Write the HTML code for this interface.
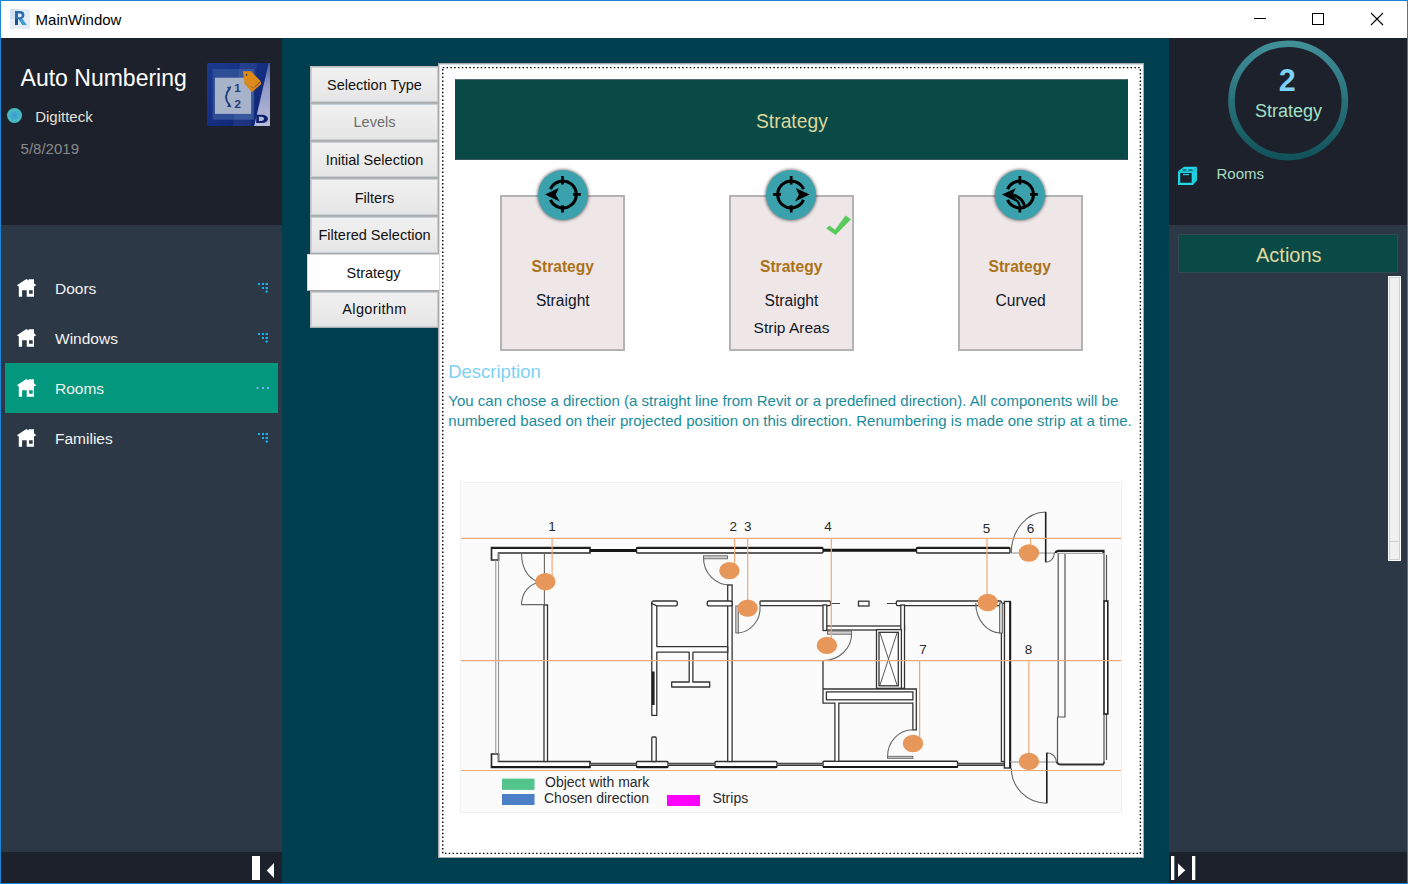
<!DOCTYPE html>
<html><head><meta charset="utf-8"><title>MainWindow</title>
<style>
*{margin:0;padding:0;box-sizing:border-box}
html,body{width:1408px;height:884px;overflow:hidden;background:#003f4f;font-family:"Liberation Sans",sans-serif}
.a{position:absolute}
.t{position:absolute;white-space:nowrap;line-height:1}
.tab{position:absolute;left:310px;width:129px;border:1px solid #acacac;border-top-color:#b2b2b2;border-left-color:#bdbdbd;background:linear-gradient(#f1f1f1,#e5e5e5);box-shadow:inset 0 0 0 1px #c5d0d4}
.tabt{position:absolute;left:0;width:100%;text-align:center;font-size:14.5px;color:#101010;line-height:1;white-space:nowrap}
.card{position:absolute;top:195px;width:125px;height:156px;background:#efe6e8;border:2px solid #b3b3b3}
.circ{position:absolute;top:170px;width:50px;height:50px;border-radius:50%;background:#3aa1ad;box-shadow:0 0 3px 1px rgba(0,0,0,.45)}
.nav{position:absolute;left:55px;font-size:15.5px;color:#f2f2f2;line-height:1;white-space:nowrap}
</style></head><body>
<!-- window border -->
<div class="a" style="left:0;top:0;width:1408px;height:884px;border:1px solid #1a84d8"></div>
<!-- title bar -->
<div class="a" style="left:1px;top:1px;width:1406px;height:37px;background:#fff"></div>
<svg class="a" style="left:10px;top:9px" width="20" height="20" viewBox="0 0 20 20">
 <rect x="0" y="0" width="20" height="20" fill="#e4ecf6"/>
 <rect x="0" y="0" width="8" height="10" fill="#d3e0f0"/>
 <path d="M5 2 h6 a4 4 0 0 1 1 7.6 l4.5 6.4 h-4 l-3.8-5.8 h-0.7 v5.8 h-3 z M8 4.6 v3.6 h2 a1.8 1.8 0 0 0 0-3.6 z" fill="#2b6cb0"/>
 <path d="M5 10 v6 h3 v-6 z" fill="#1f4f8a"/>
 <path d="M9.5 10.4 l3.2 5.6 h4 l-4.5-6.4 z" fill="#3da0d0"/>
</svg>
<div class="t" style="left:35.6px;top:12.2px;font-size:15px;color:#000">MainWindow</div>
<svg class="a" style="left:1250px;top:10px" width="140" height="20" viewBox="1250 10 140 20">
 <line x1="1254" y1="18.5" x2="1266" y2="18.5" stroke="#000" stroke-width="1"/>
 <rect x="1312.5" y="13.5" width="11" height="11" fill="none" stroke="#000" stroke-width="1"/>
 <path d="M1371 13 L1383 25 M1383 13 L1371 25" stroke="#000" stroke-width="1.1"/>
</svg>

<!-- left panel -->
<div class="a" style="left:1px;top:38px;width:281px;height:187px;background:#1c212b"></div>
<div class="a" style="left:1px;top:225px;width:281px;height:627px;background:#2d3846"></div>
<div class="a" style="left:1px;top:852px;width:281px;height:31px;background:#1c212b"></div>
<div class="t" style="left:20.6px;top:67px;font-size:23px;color:#fff">Auto Numbering</div>
<div class="a" style="left:7px;top:108px;width:15px;height:15px;border-radius:50%;background:radial-gradient(circle,#3f96d6 0%,#45b9c4 55%,#48c0b0 100%)"></div>
<div class="t" style="left:35.2px;top:109.1px;font-size:15px;color:#e6e2d8">Digitteck</div>
<div class="t" style="left:20.6px;top:141px;font-size:15px;color:#8a8a8a">5/8/2019</div>
<!-- logo -->
<svg class="a" style="left:207px;top:63px" width="63" height="63" viewBox="0 0 63 63">
 <defs>
  <linearGradient id="lg1" x1="0" y1="0" x2="1" y2="1"><stop offset="0" stop-color="#1c3a8e"/><stop offset="1" stop-color="#0c2272"/></linearGradient>
  <linearGradient id="lg2" x1="0" y1="0" x2="0" y2="1"><stop offset="0" stop-color="#4a5fa8"/><stop offset="0.35" stop-color="#8e98c6"/><stop offset="1" stop-color="#b8bdd8"/></linearGradient>
 </defs>
 <rect x="0" y="0" width="63" height="63" rx="1.5" fill="url(#lg1)"/>
 <rect x="5.6" y="6.1" width="41.6" height="50.6" fill="#2d4e97"/>
 <polygon points="33,0 50,0 44,63 26,63" fill="#ffffff" opacity="0.06"/>
 <rect x="7.9" y="14.7" width="36.2" height="36.2" fill="#a7b3c9"/>
 <polygon points="61.7,0 63,0 63,63 47.2,63" fill="url(#lg2)"/>
 <path d="M49.2 51.8 h5.8 a6 4.05 0 0 1 0 8.1 h-5.8 z M51.9 53.8 v4.1 h2.6 a2.6 2.05 0 0 0 0-4.1 z" fill="#0e1f6e" fill-rule="evenodd"/>
 <text x="27.2" y="28.7" font-size="11.5" font-weight="700" fill="#1f3f7e" font-family="Liberation Sans">1</text>
 <text x="27.4" y="45.4" font-size="11.5" font-weight="700" fill="#1f3f7e" font-family="Liberation Sans">2</text>
 <path d="M22.5 25.6 Q15.5 34 22.5 42.2" stroke="#1f3f7e" stroke-width="1.9" fill="none"/>
 <path d="M24.5 23.6 l-4.6 0.4 l2.6 3.6 z M24.5 44.2 l-4.6-0.4 l2.6-3.6 z" fill="#1f3f7e"/>
 <polygon points="37.3,17.2 46.3,25.3 53.8,18.5 54.2,21 45,29.3 37,20" fill="#d98616"/>
 <polygon points="35.9,8.3 44.1,8.3 53.6,18.3 46.3,24.9 37.3,16.7" fill="#de8a18"/>
 <circle cx="39.6" cy="11.8" r="0.9" fill="#1f3f7e"/>
</svg>

<!-- nav items -->
<div class="a" style="left:5px;top:363px;width:273px;height:50px;background:#03977e"></div>
<svg class="a" style="left:0;top:0" width="290" height="470" viewBox="0 0 290 470">
 <defs>
  <path id="house" d="M16.9 285.3 L26.4 279.1 L28.6 280.5 L28.6 279.2 L34 279.2 L34 283.3 L36.3 285.3 L34 286.6 L34 296.8 L26.7 296.8 L26.7 290.2 L22.1 290.2 L22.1 296.8 L18.8 296.8 L18.8 286.6 Z M29.1 290.2 L32.7 290.2 L32.7 293.8 L29.1 293.8 Z" fill-rule="evenodd" fill="#fff"/>
  <g id="dots" fill="#10b4f4"><rect x="258" y="283" width="2" height="2"/><rect x="262" y="283" width="2" height="2"/><rect x="265.5" y="283" width="2.5" height="2"/><rect x="262" y="287" width="2" height="2"/><rect x="265.5" y="287" width="2.5" height="2"/><path d="M266.7 290 l1.5 1.5 l-1.5 1.5 l-1.5-1.5z"/></g>
 </defs>
 <use href="#house"/><use href="#house" y="50"/><use href="#house" y="100"/><use href="#house" y="150"/>
 <use href="#dots"/><use href="#dots" y="50"/><use href="#dots" y="150"/>
 <g fill="#6db5f0"><rect x="256.5" y="387" width="2" height="2"/><rect x="262" y="387" width="2" height="2"/><rect x="267" y="387" width="2" height="2"/></g>
</svg>
<div class="nav" style="top:280.9px">Doors</div>
<div class="nav" style="top:330.9px">Windows</div>
<div class="nav" style="top:380.9px">Rooms</div>
<div class="nav" style="top:430.9px">Families</div>
<svg class="a" style="left:250px;top:854px" width="30" height="28" viewBox="250 854 30 28">
 <rect x="252" y="856" width="8" height="24" fill="#fff"/>
 <polygon points="274,863 274,878 266.7,870.5" fill="#fff"/>
</svg>

<!-- right panel -->
<div class="a" style="left:1169px;top:38px;width:238px;height:187px;background:#1c212b"></div>
<div class="a" style="left:1169px;top:225px;width:238px;height:627px;background:#2d3846"></div>
<div class="a" style="left:1169px;top:852px;width:238px;height:31px;background:#1c212b"></div>
<svg class="a" style="left:1169px;top:38px" width="238" height="160" viewBox="1169 38 238 160">
 <defs><linearGradient id="ring" x1="0" y1="0" x2="0" y2="1"><stop offset="0" stop-color="#418f99"/><stop offset="1" stop-color="#11535a"/></linearGradient></defs>
 <circle cx="1288.2" cy="100.4" r="56.7" fill="none" stroke="url(#ring)" stroke-width="6.6"/>
 <path d="M1178 171.2 H1193 V185 H1178 Z M1180.2 173.1 V182.7 H1191.7 V173.1 Z" fill="#1ed6e6" fill-rule="evenodd"/>
 <path d="M1193 171.2 L1197 166.8 V180.4 L1193 185 Z" fill="#1ccfdc"/>
 <path d="M1178 171.2 L1184.1 166.8 H1197 L1193 171.2 Z" fill="#1ed6e6"/>
 <path d="M1182.6 170 H1186.5 M1188.3 170 H1192.6" stroke="#1c212b" stroke-width="1.2"/>
 <rect x="1183" y="173.9" width="5.9" height="1.3" fill="#1ed6e6"/>
</svg>
<div class="t" style="left:1278.8px;top:64.8px;font-size:30.5px;font-weight:700;color:#7cd2fa">2</div>
<div class="t" style="left:1255px;top:101.7px;font-size:18px;color:#a3e0c8">Strategy</div>
<div class="t" style="left:1216.5px;top:166.1px;font-size:15px;color:#a9dcc2">Rooms</div>
<div class="a" style="left:1179px;top:235px;width:218px;height:37px;background:#094a47;box-shadow:0 0 0 1px #34484f"></div>
<div class="t" style="left:1256px;top:245px;font-size:20px;color:#e0d9a0">Actions</div>
<div class="a" style="left:1388px;top:276px;width:13px;height:285px;background:#f0f0f0;border:1px solid #fff;box-shadow:inset 0 0 0 1px #cdd0d3"></div>
<div class="a" style="left:1389px;top:541px;width:11px;height:1px;background:#cdd0d3"></div>
<svg class="a" style="left:1169px;top:854px" width="30" height="28" viewBox="1169 854 30 28">
 <rect x="1171" y="856" width="3.3" height="24" fill="#fff"/>
 <polygon points="1178,863.5 1178,877 1185.3,870.3" fill="#fff"/>
 <rect x="1192" y="856" width="3.3" height="24" fill="#fff"/>
</svg>

<!-- tabs -->
<div class="tab" style="top:66px;height:37px;border-top-color:#bcbcbc"><div class="tabt" style="top:10.7px">Selection Type</div></div>
<div class="tab" style="top:103px;height:38px"><div class="tabt" style="top:11.3px;color:#6d6d6d">Levels</div></div>
<div class="tab" style="top:141px;height:37px"><div class="tabt" style="top:10.7px">Initial Selection</div></div>
<div class="tab" style="top:178px;height:38px"><div class="tabt" style="top:11.8px">Filters</div></div>
<div class="tab" style="top:216px;height:38px"><div class="tabt" style="top:10.9px">Filtered Selection</div></div>
<div class="tab" style="top:291px;height:37px"><div class="tabt" style="top:10.4px;letter-spacing:0.35px">Algorithm</div></div>

<!-- content box -->
<div class="a" style="left:438px;top:63px;width:706px;height:795px;background:#fff;border:1px solid #a9a9a9;box-shadow:inset 1px 1px 0 #d5dee3"></div>
<div class="a" style="left:307px;top:254px;width:132px;height:37px;background:#fff;border-left:1px solid #d0d8da;border-top:1px solid #d6d6d6;border-bottom:1px solid #a8a8a8"></div>
<div class="tabt" style="left:307px;width:133px;top:265.7px;position:absolute">Strategy</div>
<svg class="a" style="left:440px;top:65px" width="704" height="793" viewBox="440 65 704 793">
 <rect x="442.75" y="67.6" width="697.65" height="785.8" fill="none" stroke="#000" stroke-width="1.4" stroke-dasharray="1.5 2.3"/>
</svg>

<!-- strategy header -->
<div class="a" style="left:455px;top:79px;width:673px;height:81px;background:#094a47;border-top:1px solid #4f7173;border-left:1px solid #27404a;border-right:1px solid #263a44;border-bottom:1px solid #3a5560"></div>
<div class="t" style="left:756px;top:112.4px;font-size:19.3px;color:#ddd69d">Strategy</div>

<!-- cards -->
<div class="card" style="left:500px"></div>
<div class="card" style="left:729px"></div>
<div class="card" style="left:958px"></div>
<div class="circ" style="left:538px"></div>
<div class="circ" style="left:766px"></div>
<div class="circ" style="left:995px"></div>
<svg class="a" style="left:440px;top:160px" width="700" height="200" viewBox="440 160 700 200">
 <g fill="none" stroke="#000" stroke-width="3.1">
  <path d="M550.47 189.01 A13.5 13.5 0 1 1 550.47 199.99"/>
  <path d="M803.53 189.01 A13.5 13.5 0 1 0 803.53 199.99"/>
  <path d="M1007.57 189.01 A13.5 13.5 0 1 1 1007.57 199.99"/>
 </g>
 <g stroke="#000" stroke-width="2.7">
  <path d="M562.5 176 V184.6 M562.5 205.2 V212.5 M573 194.4 H580.8"/>
  <path d="M791.2 176 V184.6 M791.2 205.2 V212.5 M773 194.4 H781"/>
  <path d="M1019.9 176 V184.6 M1019.9 205.2 V212.5 M1030 194.4 H1037.8"/>
 </g>
 <polygon points="545,194.4 558.8,188 555.7,194.8 559.7,201.6" fill="#000"/>
 <polygon points="809.6,194.4 795.8,188 798.9,194.8 794.9,201.6" fill="#000"/>
 <polygon points="1001.9,194.4 1015.8,188.2 1013,193.8 1016.5,201.7" fill="#000"/>
 <path d="M1013 193.5 Q1024 196 1026 206 L1023.2 206.5 Q1021 199 1014.5 197.5 Z" fill="#000"/>
 <path d="M1014 198.8 Q1019 201 1019.5 205.5" stroke="#000" stroke-width="2" fill="none"/>
 <path d="M826.3 228.6 L829.3 225.6 L835 229.8 L845.6 215.6 L851 219.2 L835.6 235 Z" fill="#58cb5c"/>
</svg>
<div class="t" style="left:531.6px;top:259.1px;font-size:15.6px;font-weight:700;color:#ab7317">Strategy</div>
<div class="t" style="left:760px;top:259.1px;font-size:15.6px;font-weight:700;color:#ab7317">Strategy</div>
<div class="t" style="left:988.5px;top:259.1px;font-size:15.6px;font-weight:700;color:#ab7317">Strategy</div>
<div class="t" style="left:535.9px;top:292.7px;font-size:15.6px;color:#101828">Straight</div>
<div class="t" style="left:764.6px;top:292.7px;font-size:15.6px;color:#101828">Straight</div>
<div class="t" style="left:753.6px;top:319.6px;font-size:15.5px;color:#101828">Strip Areas</div>
<div class="t" style="left:995.5px;top:292.7px;font-size:15.6px;color:#101828">Curved</div>

<!-- description -->
<div class="t" style="left:448.2px;top:362.7px;font-size:18.5px;color:#7fd0f2">Description</div>
<div class="t" style="left:448.3px;top:393.4px;font-size:15px;letter-spacing:0.01px;color:#1a8b9c">You can chose a direction (a straight line from Revit or a predefined direction). All components will be</div>
<div class="t" style="left:448.3px;top:413.3px;font-size:15px;letter-spacing:0.03px;color:#1a8b9c">numbered based on their projected position on this direction. Renumbering is made one strip at a time.</div>

<!-- floor plan -->
<div class="a" style="left:460px;top:482px;width:662px;height:331px;background:#fbfbfb;border:1px solid #eef1f1"></div>
<svg class="a" style="left:461px;top:483px" width="661" height="330" viewBox="461 483 661 330">
 <g font-family="Liberation Sans" font-size="13.5" fill="#2a2a2a" text-anchor="middle">
  <text x="552" y="531.3">1</text><text x="733.3" y="531.3">2</text><text x="747.7" y="531.3">3</text>
  <text x="828" y="531.3">4</text><text x="986.6" y="532.5">5</text><text x="1030.6" y="532.5">6</text>
  <text x="923" y="654">7</text><text x="1028.5" y="654">8</text>
 </g>
 <!-- exterior walls -->
 <g fill="#fff" stroke="#2e2e2e" stroke-width="1.4">
  <path d="M491.5 547.5 H590 V553 H498.5 V560 H491.5 Z" stroke-width="1.7"/>
  <rect x="636.5" y="547.5" width="186.5" height="5.5" rx="1"/>
  <rect x="916.5" y="547.5" width="93.5" height="5.5" rx="1"/>
  <path d="M491.5 767.5 H590 V761.5 H498.5 V754 H491.5 Z" stroke-width="1.7"/>
  <rect x="636.5" y="761.5" width="31.5" height="6" rx="1"/>
  <rect x="715" y="761.5" width="62" height="6" rx="1"/>
  <rect x="823" y="761.3" width="134.6" height="6" rx="1"/>
  <rect x="1004.4" y="601.5" width="5.8" height="166.5"/>
 </g>
 <g stroke="#1a1a1a" fill="none">
  <path d="M491.5 548.3 H590 M636.5 548.3 H823 M916.5 548.3 H1010" stroke-width="1.5"/>
  <path d="M491.5 767 H590 M636.5 767 H668 M715 767 H777 M823 767 H957.6" stroke-width="1.8"/>
  <path d="M1010.2 601.5 V768" stroke-width="2"/>
 </g>
 <g stroke="#151515" stroke-width="3" fill="none">
  <path d="M590 550.5 H636.5 M823 550.3 H916.5"/>
 </g>
 <g stroke="#3a3a3a" stroke-width="3.2" fill="none">
  <path d="M590 764.3 H636.5 M668 764.3 H715 M777 764.3 H823 M957.6 764.3 H1004"/>
 </g>
 <g stroke="#9a9a9a" stroke-width="0.9" fill="none">
  <path d="M590 764.3 H636.5 M668 764.3 H715 M777 764.3 H823 M957.6 764.3 H1004"/>
 </g>
 <!-- left exterior thin double -->
 <g stroke="#8e8e8e" stroke-width="1" fill="none">
  <path d="M495.8 560 V754 M498.6 553 V761.5"/>
  <path d="M1010 553 H1055"/>
  <path d="M1010 762 H1056"/>
 </g>
 <!-- interior walls -->
 <g fill="#fff" stroke="#333" stroke-width="1.3">
  <rect x="544" y="605" width="3.5" height="156.5"/>
  <rect x="727.7" y="585" width="4.4" height="176.5"/>
  <rect x="651.8" y="601" width="25.5" height="4.9" rx="2"/>
  <rect x="707.2" y="601" width="25" height="4.9" rx="2"/>
  <rect x="760" y="601" width="70.5" height="4.6" rx="1"/>
  <rect x="896.4" y="601" width="105" height="4.6" rx="1"/>
  <path d="M651.8 603.5 V715.4 H656.8 V652.2 H689.2 V682 H671.7 V687 H709.7 V682 H692.9 V652.2 H727.7 V646.6 H656.8 V605.9 Z" stroke-linejoin="round"/>
  <rect x="651.8" y="737" width="4.4" height="24.5" rx="1"/>
  <rect x="823" y="605" width="3.8" height="25.5"/>
  <rect x="826.8" y="626" width="77.7" height="4"/>
  <rect x="900.8" y="605" width="3.7" height="83.3"/>
  <rect x="876.5" y="629.6" width="24.9" height="58.7"/>
  <rect x="879" y="632.3" width="19.3" height="53.5"/>
  <path d="M823 660.5 V703.2 H834.9 V761.3 H838.8 V703.2 H912.9 V729.8 H916.3 V689 H823"/>
  <rect x="826.4" y="691.9" width="86.5" height="7.9"/>
  <rect x="858.5" y="601.2" width="10.5" height="4.8"/>
  <rect x="1001.4" y="603.5" width="3" height="158"/>
 </g>
 <g stroke="#444" stroke-width="1.1" fill="none">
  <path d="M653.2 671.5 V705" stroke="#222" stroke-width="2.8"/>
  <path d="M880 633 L897 685 M897 633 L880 685" stroke-width="0.9"/>
  <path d="M830.5 603.5 H840 M887 603.5 H896.4"/>
 </g>
 <!-- door leaves -->
 <g fill="#cfcfcf" stroke="#555" stroke-width="0.8">
  <rect x="703.5" y="555.8" width="24" height="3"/>
  <rect x="827.4" y="631" width="24.2" height="3.2"/>
  <rect x="999.6" y="603" width="2.8" height="30"/>
  <rect x="735.8" y="606" width="2.5" height="27"/>
  <rect x="887.5" y="756.3" width="25.4" height="2"/>
 </g>
 <g stroke="#666" stroke-width="1.1" fill="none">
  <path d="M544.4 553 V605 M521.3 604.6 H547.5"/>
  <path d="M521.5 553.8 Q522 574 536 581"/>
  <path d="M536 583 Q522 589 521.5 604.4"/>
  <path d="M703.5 558 A26.5 27 0 0 0 730 585"/>
  <path d="M738 633 A24 25 0 0 0 760 606"/>
  <path d="M851.6 634 A28.6 26.5 0 0 1 823 660.5"/>
  <path d="M912.9 729.8 A25.4 27 0 0 0 887.5 756.9"/>
  <path d="M975.8 603 A25 30 0 0 0 1000.5 633"/>
  <path d="M1011.3 553 A34.4 41 0 0 1 1045.7 512"/>
  <path d="M1045.7 562.3 A8.6 9.3 0 0 0 1054.3 553"/>
  <path d="M1011.3 768 A35.5 35.3 0 0 0 1046.8 803.3"/>
  <path d="M1046.8 752.8 A9.6 9.2 0 0 1 1056.4 762"/>
 </g>
 <g stroke="#1e1e1e" stroke-width="1.6" fill="none">
  <path d="M1045.7 512 V562.3 M1046.8 752.8 V803.3"/>
 </g>
 <!-- annex -->
 <g fill="none" stroke="#555" stroke-width="1.2">
  <path d="M1058.2 553 V717 M1065 553 V717 H1057.5 V762"/>
  <path d="M1104 553 V601 M1106.5 555 V601 M1104 714 V762 M1106.5 714 V760"/>
 </g>
 <path d="M1055.5 553 Q1056 550.8 1059 550.8 H1103.5 V553" fill="none" stroke="#222" stroke-width="2.2"/>
 <path d="M1059 553.3 H1103" stroke="#aaa" stroke-width="1.2"/>
 <path d="M1056.5 762 Q1058 764.5 1061 764.5 H1103 L1104.5 762" fill="none" stroke="#333" stroke-width="1.8"/>
 <rect x="1104" y="601" width="3.8" height="113" fill="#fff" stroke="#222" stroke-width="1.6"/>
 <!-- orange lines -->
 <g stroke="#f0a97a" stroke-width="1.2" fill="none">
  <path d="M461 538.3 H1121 M461 660.7 H1121 M461 770.5 H1121"/>
  <path d="M552.1 538 V580 M734.6 538 V570 M747.7 538 V608 M831.3 538 V645 M987 538 V602 M1030.6 538 V553 M919.6 661 V743 M1028.9 661 V761"/>
 </g>
 <!-- dots -->
 <g fill="#e8975b">
  <ellipse cx="545.4" cy="581.7" rx="10.2" ry="8.7"/>
  <ellipse cx="729.4" cy="570.6" rx="10.2" ry="8.7"/>
  <ellipse cx="747.7" cy="608.1" rx="10.2" ry="8.7"/>
  <ellipse cx="826.9" cy="645.4" rx="10.2" ry="8.7"/>
  <ellipse cx="987.7" cy="602.5" rx="10.2" ry="8.7"/>
  <ellipse cx="1028.9" cy="553" rx="10.2" ry="8.7"/>
  <ellipse cx="913" cy="743.5" rx="10.2" ry="8.7"/>
  <ellipse cx="1028.9" cy="761.4" rx="10.2" ry="8.7"/>
 </g>
 <!-- legend -->
 <rect x="502" y="778.6" width="32.5" height="11.3" fill="#52c48c"/>
 <rect x="502" y="794" width="32.5" height="11" fill="#4b7fc7"/>
 <rect x="667" y="795" width="33" height="11" fill="#ff00ff"/>
 <g font-family="Liberation Sans" font-size="14" fill="#2a2a2a">
  <text x="545" y="786.7">Object with mark</text>
  <text x="544" y="803">Chosen direction</text>
  <text x="712.4" y="803">Strips</text>
 </g>
</svg>

</body></html>
